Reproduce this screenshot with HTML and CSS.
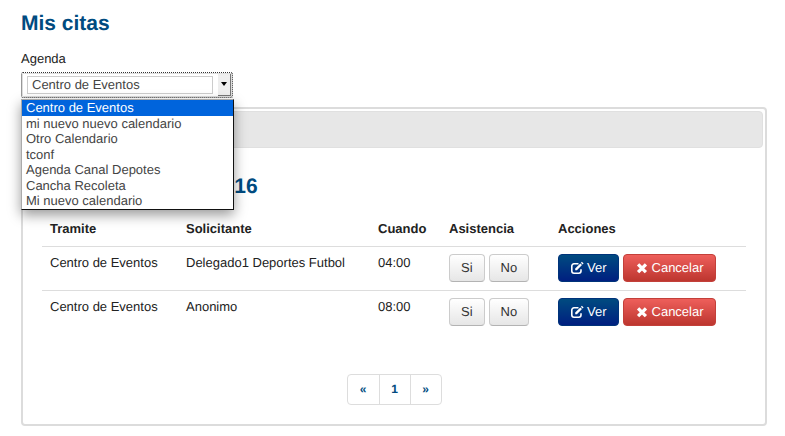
FILE: index.html
```
<!DOCTYPE html>
<html lang="es">
<head>
  <meta charset="UTF-8">
  <meta name="viewport" content="width=device-width, initial-scale=1">
  <title>Mis citas</title>
  <link rel="stylesheet" href="styles.css">
</head>
<body>
  <svg class="sprite" aria-hidden="true">
    <symbol id="icon-edit" viewBox="0 0 14 14">
      <path d="M8.500 2.800H4A2.200 2.200 0 0 0 1.800 5V10A2.200 2.200 0 0 0 4 12.200H8.800A2.200 2.200 0 0 0 11 10V8.300" fill="none" stroke="currentColor" stroke-width="1.600"/>
      <path d="M5.200 9.300V7.500L10.300 2.400 12 4.100 6.900 9.300zM10.900 1.700L11.900.8 13.600 2.500 12.600 3.400z" fill="currentColor"/>
    </symbol>
    <symbol id="icon-remove" viewBox="0 0 14 14">
      <path d="M4.200 4.500L9.800 10.100M9.800 4.500L4.200 10.100" fill="none" stroke="currentColor" stroke-width="3.200" stroke-linecap="square"/>
    </symbol>
  </svg>

  <main class="page">
    <h1>Mis citas</h1>

    <label for="agenda">Agenda</label>
    <div class="combo">
      <select id="agenda" name="agenda">
        <option selected>Centro de Eventos</option>
        <option>mi nuevo nuevo calendario</option>
        <option>Otro Calendario</option>
        <option>tconf</option>
        <option>Agenda Canal Depotes</option>
        <option>Cancha Recoleta</option>
        <option>Mi nuevo calendario</option>
      </select>
      <span class="combo-arrow"></span>
      <ul class="combo-list" role="listbox" aria-label="Agenda">
        <li class="active" role="option" aria-selected="true">Centro de Eventos</li>
        <li role="option">mi nuevo nuevo calendario</li>
        <li role="option">Otro Calendario</li>
        <li role="option">tconf</li>
        <li role="option">Agenda Canal Depotes</li>
        <li role="option">Cancha Recoleta</li>
        <li role="option">Mi nuevo calendario</li>
      </ul>
    </div>

    <section class="panel">
      <div class="panel-bar"></div>
      <div class="panel-body">
        <h2>2016</h2>
        <table class="citas">
          <colgroup>
            <col class="col-tramite">
            <col class="col-solicitante">
            <col class="col-cuando">
            <col class="col-asistencia">
            <col>
          </colgroup>
          <thead>
            <tr>
              <th>Tramite</th>
              <th>Solicitante</th>
              <th>Cuando</th>
              <th>Asistencia</th>
              <th>Acciones</th>
            </tr>
          </thead>
          <tbody>
            <tr>
              <td>Centro de Eventos</td>
              <td>Delegado1 Deportes Futbol</td>
              <td>04:00</td>
              <td>
                <div class="btn-row">
                  <button type="button" class="btn">Si</button>
                  <button type="button" class="btn">No</button>
                </div>
              </td>
              <td>
                <div class="btn-row">
                  <button type="button" class="btn btn-primary"><svg class="icon"><use href="#icon-edit"/></svg>Ver</button>
                  <button type="button" class="btn btn-danger"><svg class="icon"><use href="#icon-remove"/></svg>Cancelar</button>
                </div>
              </td>
            </tr>
            <tr>
              <td>Centro de Eventos</td>
              <td>Anonimo</td>
              <td>08:00</td>
              <td>
                <div class="btn-row">
                  <button type="button" class="btn">Si</button>
                  <button type="button" class="btn">No</button>
                </div>
              </td>
              <td>
                <div class="btn-row">
                  <button type="button" class="btn btn-primary"><svg class="icon"><use href="#icon-edit"/></svg>Ver</button>
                  <button type="button" class="btn btn-danger"><svg class="icon"><use href="#icon-remove"/></svg>Cancelar</button>
                </div>
              </td>
            </tr>
          </tbody>
        </table>

        <nav class="pagination">
          <a href="#">«</a>
          <a href="#">1</a>
          <a href="#">»</a>
        </nav>
      </div>
    </section>
  </main>
</body>
</html>
```
FILE: styles.css
```
* {
  margin: 0;
  padding: 0;
  box-sizing: border-box;
}

body {
  font-family: "Liberation Sans", Arial, Helvetica, sans-serif;
  font-size: 13px;
  line-height: 18px;
  text-rendering: geometricPrecision;
  color: #222;
  background: #fff;
}

.sprite {
  display: none;
}

.page {
  padding: 12px 18px 10px 21px;
}

h1,
h2 {
  font-size: 21px;
  line-height: 24px;
  color: #004b80;
}

h1 {
  margin-bottom: 14px;
}

label {
  display: block;
  margin-bottom: 4px;
}

/* agenda selector */
.combo {
  position: relative;
  display: flex;
  justify-content: space-between;
  width: 212px;
  height: 26px;
  margin-bottom: 9px;
  padding-left: 5px;
  border: 1px dotted #333;
  border-radius: 2px;
  outline: 1px solid #ddd;
  outline-offset: -2px;
}

.combo select {
  appearance: none;
  width: 186px;
  height: 18px;
  margin-top: 3px;
  padding-left: 4px;
  border: 1px solid #ccc;
  background: #fff;
  font: inherit;
  line-height: 16px;
  text-rendering: inherit;
  color: #444;
  outline: none;
}

.combo-arrow {
  display: flex;
  align-items: center;
  justify-content: center;
  width: 14px;
  border-right: 2px solid #777;
  border-bottom: 2px solid #777;
  background: #eee;
}

.combo-arrow::before {
  content: "";
  border: 3px solid transparent;
  border-top: 4px solid #000;
  border-bottom: none;
}

.combo-list {
  position: absolute;
  top: 26px;
  left: -1px;
  z-index: 10;
  width: 213px;
  border: 1px solid #aaa;
  border-right-color: #111;
  border-bottom-color: #111;
  background: #fff;
  box-shadow: 0 5px 12px rgba(0, 0, 0, 0.4);
  list-style: none;
  color: #444;
}

.combo-list li {
  padding-left: 4px;
  line-height: 15px;
}

.combo-list li:nth-child(odd) {
  line-height: 16px;
}

.combo-list .active {
  background: #0064dc;
  color: #fff;
}

/* panel */
.panel {
  padding: 2px;
  border: 2px solid #dcdcdc;
  border-radius: 4px;
}

.panel-bar {
  height: 37px;
  border: 1px solid #e0e0e0;
  border-radius: 4px;
  background: #e7e7e7;
}

.panel-body {
  padding: 27px 17px 17px;
}

h2 {
  margin-bottom: 14px;
  padding-left: 169px;
}

.citas {
  width: 100%;
  table-layout: fixed;
  border-collapse: collapse;
}

.col-tramite {
  width: 136px;
}

.col-solicitante {
  width: 192px;
}

.col-cuando {
  width: 71px;
}

.col-asistencia {
  width: 109px;
}

.citas th,
.citas td {
  padding: 7px 8px 8px;
  text-align: left;
  vertical-align: top;
}

.citas td {
  border-top: 1px solid #ddd;
}

.btn-row {
  display: flex;
  gap: 4px;
}

.btn {
  display: flex;
  align-items: center;
  gap: 3px;
  height: 28px;
  padding: 0 11px;
  border: 1px solid #ccc;
  border-bottom-color: #b3b3b3;
  border-radius: 4px;
  background: linear-gradient(#fff, #e6e6e6);
  font: inherit;
  text-rendering: inherit;
  color: #333;
  cursor: pointer;
}

.btn-primary {
  border-color: #00337a;
  background: linear-gradient(#004b80, #001f80);
  color: #fff;
}

.btn-danger {
  border-color: #c3403a;
  background: linear-gradient(#ee5f5b, #bd362f);
  color: #fff;
}

.icon {
  width: 14px;
  height: 14px;
}

.pagination {
  display: flex;
  width: fit-content;
  margin: 40px auto 0;
  border: 1px solid #ddd;
  border-radius: 4px;
}

.pagination a {
  width: 31px;
  line-height: 29px;
  text-align: center;
  text-decoration: none;
  font-size: 12px;
  font-weight: bold;
  color: #004b80;
}

.pagination a + a {
  border-left: 1px solid #ddd;
}
```
